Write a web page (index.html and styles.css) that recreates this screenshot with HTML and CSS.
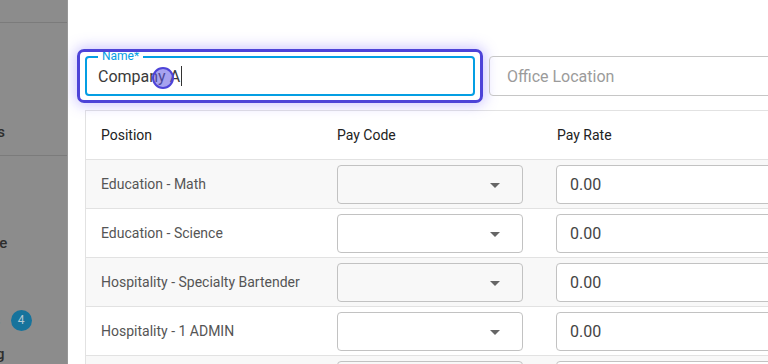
FILE: index.html
```html
<!DOCTYPE html>
<html>
<head>
<meta charset="utf-8">
<link rel="stylesheet" href="styles.css">
</head>
<body>
<div class="app">
  <aside class="sidebar">
    <div class="side-top"></div>
    <div class="side-section"><span class="side-text cut-s">Positions</span></div>
    <div class="side-item item-e"><span class="side-text cut-e">Rate Schedule</span></div>
    <div class="side-item item-badge"><span class="side-text cut-teal">Alerts</span><span class="badge">4</span></div>
    <div class="side-item item-g"><span class="side-text cut-g">Billing</span></div>
  </aside>
  <main class="main">
    <div class="form-row">
      <div class="name-wrap">
        <div class="field field-focus">
          <span class="field-label">Name*</span>
          <span class="field-value">Company A</span><span class="caret"></span>
        </div>
        <div class="highlight"></div>
        <div class="pointer"></div>
      </div>
      <div class="field field-office">
        <span class="placeholder">Office Location</span>
      </div>
    </div>
    <div class="table">
      <div class="tr th">
        <div class="td c1">Position</div>
        <div class="td c2">Pay Code</div>
        <div class="td c3">Pay Rate</div>
      </div>
      <div class="tr odd">
        <div class="td c1">Education - Math</div>
        <div class="td c2"><div class="select"><span class="arrow"></span></div></div>
        <div class="td c3"><div class="rate">0.00</div></div>
      </div>
      <div class="tr">
        <div class="td c1">Education - Science</div>
        <div class="td c2"><div class="select"><span class="arrow"></span></div></div>
        <div class="td c3"><div class="rate">0.00</div></div>
      </div>
      <div class="tr odd">
        <div class="td c1">Hospitality - Specialty Bartender</div>
        <div class="td c2"><div class="select"><span class="arrow"></span></div></div>
        <div class="td c3"><div class="rate">0.00</div></div>
      </div>
      <div class="tr">
        <div class="td c1">Hospitality - 1 ADMIN</div>
        <div class="td c2"><div class="select"><span class="arrow"></span></div></div>
        <div class="td c3"><div class="rate">0.00</div></div>
      </div>
      <div class="tr odd">
        <div class="td c1">Hospitality - Server</div>
        <div class="td c2"><div class="select"><span class="arrow"></span></div></div>
        <div class="td c3"><div class="rate">0.00</div></div>
      </div>
    </div>
  </main>
</div>
</body>
</html>
```
FILE: styles.css
```css
* { box-sizing: border-box; }
html, body { margin: 0; padding: 0; height: 364px; overflow: hidden; }
body { font-family: Roboto, "Liberation Sans", Arial, sans-serif; background: #fff; color: #333; }

.app { display: flex; height: 364px; }

.sidebar {
  width: 68px;
  flex: none;
  background: #8c8c8c;
  border-right: 1px solid #979797;
  overflow: hidden;
  display: flex;
  flex-direction: column;
}
.side-top { height: 23px; border-bottom: 1px solid #7b7b7b; flex: none; }
.side-section {
  height: 133px;
  flex: none;
  border-bottom: 1px solid #7b7b7b;
  display: flex;
  align-items: flex-end;
  padding-bottom: 13px;
}
.side-text {
  font-size: 15px;
  font-weight: 500;
  line-height: 20px;
  color: #2e2e2e;
  white-space: nowrap;
  display: block;
}
.cut-s { margin-left: -58px; }
.side-item { display: flex; align-items: center; height: 20px; flex: none; }
.item-e { margin-top: 77px; }
.cut-e { margin-left: -89px; }
.item-badge { margin-top: 57px; }
.cut-teal { margin-left: -39px; color: #4e8a87; font-weight: 400; }
.badge {
  width: 21px; height: 21px; border-radius: 50%;
  background: #16739c; color: #b4cad4;
  font-size: 12px; line-height: 21px; text-align: center;
  margin-left: 10px;
}
.item-g { margin-top: 14px; }
.cut-g { margin-left: -37px; }

.main { flex: 1; padding: 56px 0 0 17px; overflow: hidden; }

.form-row { display: flex; gap: 14px; width: 700px; }
.name-wrap { position: relative; width: 390px; flex: none; }
.field {
  height: 40px;
  border-radius: 4px;
  position: relative;
  display: flex;
  align-items: center;
  font-size: 16px;
}
.field-focus { border: 2px solid #049ee3; padding-left: 11px; }
.field-label {
  position: absolute;
  left: 11px; top: -9px;
  padding: 0 4px;
  background: #fff;
  color: #049ee3;
  font-size: 12px;
  line-height: 14px;
}
.field-value { color: #3a3a3a; }
.caret { width: 1px; height: 20px; background: #333; margin-left: 1px; }
.highlight {
  position: absolute;
  inset: -7px -8px -7px -8px;
  border: 3px solid #4d43d8;
  border-radius: 7px;
  box-shadow: 0 0 14px 2px rgba(110, 90, 255, 0.35);
  pointer-events: none;
}
.pointer {
  position: absolute;
  left: 67px; top: 11px;
  width: 22px; height: 22px;
  border-radius: 50%;
  background: rgba(95, 85, 225, 0.55);
  border: 2px solid #4d43d8;
}
.field-office {
  flex: 1;
  border: 1px solid #c6c6c6;
  padding-left: 17px;
}
.placeholder { color: #9b9b9b; }

.table {
  margin-top: 14px;
  border-left: 1px solid #e2e2e2;
  border-top: 1px solid #e2e2e2;
  width: 720px;
}
.tr { display: flex; height: 49px; border-bottom: 1px solid #e2e2e2; align-items: center; }
.tr.odd { background: #f8f8f8; }
.td { padding-left: 15px; font-size: 14px; color: #555; }
.th .td { color: #222; }
.c1 { width: 236px; }
.c2 { width: 218px; padding-left: 15px; }
.c3 { flex: 1; padding-left: 16px; }
.th .c3 { padding-left: 17px; }
.tr:not(.th) .c2, .tr:not(.th) .c3 { padding-top: 1px; }
.tr:not(.th) .c1 { margin-top: -1px; }
.select {
  width: 186px; height: 39px;
  border: 1px solid #c2c2c2;
  border-radius: 4px;
  position: relative;
}
.arrow {
  position: absolute;
  right: 22px; top: 17px;
  width: 0; height: 0;
  border-left: 5px solid transparent;
  border-right: 5px solid transparent;
  border-top: 5px solid #666;
}
.rate {
  height: 39px;
  border: 1px solid #c2c2c2;
  border-radius: 4px;
  padding-left: 13px;
  font-size: 16px;
  color: #444;
  display: flex;
  align-items: center;
  background: #fff;
}
```
